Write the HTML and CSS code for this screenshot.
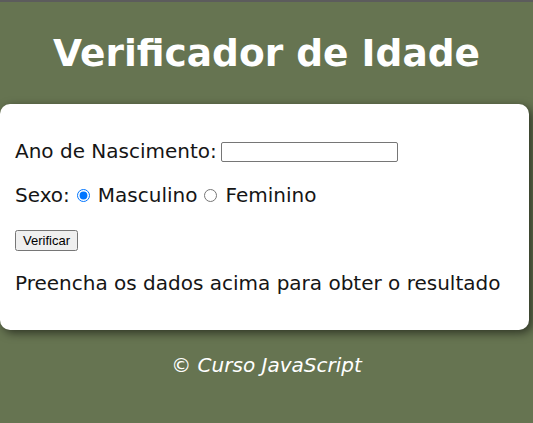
FILE: index.html
```html
<!DOCTYPE html>
<html lang="pt-BR">
<head>
<meta charset="utf-8">
<title>Verificador de Idade</title>
<link rel="stylesheet" href="styles.css">
</head>
<body>
<header class="topo">
  <h1 class="titulo">Verificador de Idade</h1>
</header>
<section class="cartao">
  <div class="linha">
    <label for="txtano">Ano de Nascimento:</label>
    <input type="number" id="txtano" class="campo">
  </div>
  <div class="linha">
    Sexo:
    <input type="radio" name="sexo" id="mas" class="radio" checked>
    <label for="mas">Masculino</label>
    <input type="radio" name="sexo" id="fem" class="radio">
    <label for="fem">Feminino</label>
  </div>
  <div class="linha">
    <button type="button" class="botao">Verificar</button>
  </div>
  <div class="linha resultado">Preencha os dados acima para obter o resultado</div>
</section>
<footer class="rodape">
  <p class="copy">&copy; Curso JavaScript</p>
</footer>
</body>
</html>
```
FILE: styles.css
```css
html, body {
  margin: 0;
  padding: 0;
}
body {
  background: #667451;
  font-family: "DejaVu Sans", "Open Sans", sans-serif;
  border-top: 2px solid #5c5c5c;
}
.topo {
  padding: 23px 0 23px;
}
.titulo {
  margin: 0;
  text-align: center;
  color: #ffffff;
  font-size: 37.5px;
  line-height: 56px;
  font-weight: 700;
}
.cartao {
  box-sizing: border-box;
  width: 529px;
  background: #ffffff;
  border-radius: 10px;
  box-shadow: 3px 3px 10px rgba(0, 0, 0, 0.55);
  padding: 35px 15px 34px;
  display: flex;
  flex-direction: column;
  gap: 19px;
  color: #151515;
  font-size: 20px;
}
.linha {
  height: 25px;
  line-height: 25px;
  display: flex;
  align-items: center;
  white-space: nowrap;
}
.campo {
  box-sizing: border-box;
  width: 177px;
  height: 20px;
  margin-left: 4px;
  border: 1px solid #767676;
  border-radius: 2px;
  padding: 0;
}
.radio {
  margin: 0 8px 0 7px;
  width: 13px;
  height: 13px;
}
.botao {
  font-family: "Liberation Sans", Arial, sans-serif;
  font-size: 13px;
  padding: 1px 6px;
  height: 21px;
  margin-top: 2px;
}
.resultado {
  margin-top: 0;
}
.rodape {
  text-align: center;
}
.copy {
  margin: 23px 0 0;
  color: #ffffff;
  font-style: italic;
  font-size: 20px;
  line-height: 24px;
}
```
